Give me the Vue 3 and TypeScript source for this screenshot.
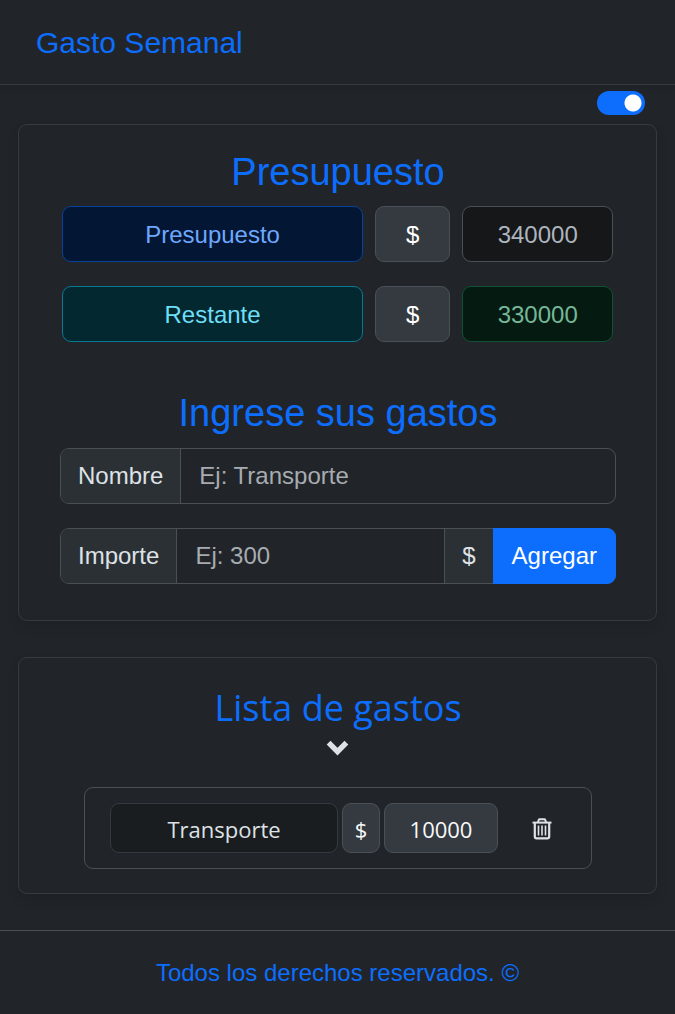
<script setup lang="ts">
import { computed, ref } from 'vue'

interface Expense {
  id: number
  name: string
  amount: number
}

const budget = ref(340000)
const expenses = ref<Expense[]>([{ id: 1, name: 'Transporte', amount: 10000 }])
const remaining = computed(() => budget.value - expenses.value.reduce((sum, e) => sum + e.amount, 0))

const dark = ref(true)
const open = ref(true)
const name = ref('')
const amount = ref('')
let nextId = 2

function addExpense() {
  const value = Number(amount.value)
  if (!name.value.trim() || !(value > 0)) return
  expenses.value.push({ id: nextId++, name: name.value.trim(), amount: value })
  name.value = ''
  amount.value = ''
}

function removeExpense(id: number) {
  expenses.value = expenses.value.filter((e) => e.id !== id)
}
</script>

<template>
  <div class="page">
    <header class="header">
      <h1>Gasto Semanal</h1>
    </header>

    <div class="theme">
      <input v-model="dark" class="switch" type="checkbox" role="switch" aria-label="Modo oscuro" />
    </div>

    <main>
      <section class="card">
        <h2>Presupuesto</h2>
        <div class="summary">
          <span class="box primary">Presupuesto</span>
          <span class="box currency">$</span>
          <span class="box dark">{{ budget }}</span>
          <span class="box info">Restante</span>
          <span class="box currency">$</span>
          <span class="box success">{{ remaining }}</span>
        </div>

        <h2>Ingrese sus gastos</h2>
        <form class="form" @submit.prevent="addExpense">
          <div class="group">
            <label class="addon" for="name">Nombre</label>
            <input id="name" v-model="name" class="field" type="text" placeholder="Ej: Transporte" />
          </div>
          <div class="group">
            <label class="addon" for="amount">Importe</label>
            <input id="amount" v-model="amount" class="field" type="text" inputmode="numeric" placeholder="Ej: 300" />
            <span class="addon">$</span>
            <button class="add" type="submit">Agregar</button>
          </div>
        </form>
      </section>

      <section class="card list">
        <h2>Lista de gastos</h2>
        <button class="toggle" type="button" aria-label="Mostrar u ocultar gastos" :aria-expanded="open" @click="open = !open">
          <svg width="24" height="18" viewBox="0 0 24 18">
            <path d="M2.6 3.6 L11.5 12.6 L20.4 3.6" fill="none" stroke="currentColor" stroke-width="5.4" />
          </svg>
        </button>
        <ul v-if="open" class="items">
          <li v-for="e in expenses" :key="e.id" class="item">
            <span class="chip name">{{ e.name }}</span>
            <span class="chip">$</span>
            <span class="chip value">{{ e.amount }}</span>
            <button class="remove" type="button" aria-label="Eliminar gasto" @click="removeExpense(e.id)">
              <svg width="20" height="22" viewBox="0 0 20 22" fill="none" stroke="currentColor">
                <path d="M0.5 4.6 H19.5" stroke-width="2" />
                <path d="M6 4.4 L6.8 1.8 Q7 1.2 7.6 1.2 H12.4 Q13 1.2 13.2 1.8 L14 4.4" stroke-width="2" />
                <path d="M2.8 5 V18.6 Q2.8 20.4 4.6 20.4 H15.4 Q17.2 20.4 17.2 18.6 V5" stroke-width="2.2" />
                <path d="M6.5 7.4 V17.4 M10 7.4 V17.4 M13.5 7.4 V17.4" stroke-width="1.6" />
              </svg>
            </button>
          </li>
        </ul>
      </section>
    </main>

    <footer class="footer">Todos los derechos reservados. ©</footer>
  </div>
</template>

<style>
body {
  background: #212529;
}
</style>

<style scoped>
.page,
.page * {
  box-sizing: border-box;
}

.page {
  color: #dee2e6;
  background: #212529;
  font: 24px/36px "Liberation Sans", Arial, sans-serif;
}

h1,
h2 {
  margin: 0;
  color: #0d6efd;
  font-weight: 400;
}

.header {
  padding: 25px 36px 23px;
  border-bottom: 1px solid #373b3e;
  box-shadow: 0 3px 6px rgba(0, 0, 0, 0.08);
}

h1 {
  font-size: 30px;
  line-height: 36px;
}

.theme {
  display: flex;
  justify-content: flex-end;
  padding: 6px 30px 9px;
}

.switch {
  appearance: none;
  width: 48px;
  height: 24px;
  margin: 0;
  border-radius: 12px;
  background: radial-gradient(circle at 12px 12px, #fff 8px, transparent 9px) #495057;
  cursor: pointer;
}

.switch:checked {
  background: radial-gradient(circle at 36px 12px, #fff 8px, transparent 9px) #0d6efd;
}

main {
  display: flex;
  flex-direction: column;
  gap: 36px;
  padding: 0 18px 36px;
}

.card {
  padding: 24px 40px 36px 41px;
  border: 1px solid #373b3e;
  border-radius: 9px;
  text-align: center;
  box-shadow: 0 6px 12px rgba(0, 0, 0, 0.1);
}

h2 {
  font-size: 38px;
  line-height: 46px;
}

.summary {
  display: grid;
  grid-template-columns: 4fr 1fr 2fr;
  gap: 24px 12px;
  margin: 11px 3px 48px 2px;
}

.box {
  padding: 10px 0 8px;
  border: 1px solid;
  border-radius: 9px;
}

.primary {
  color: #6ea8fe;
  background: #031633;
  border-color: #084298;
}

.currency {
  color: #fff;
  background: #343a40;
  border-color: #495057;
}

.dark {
  color: #adb5bd;
  background: #161719;
  border-color: #495057;
}

.info {
  color: #6edff6;
  background: #032830;
  border-color: #087990;
}

.success {
  color: #75b798;
  background: #051b11;
  border-color: #0f5132;
}

.form {
  display: flex;
  flex-direction: column;
  gap: 24px;
  margin-top: 12px;
}

.group {
  display: flex;
  height: 56px;
  border: 1px solid #495057;
  border-radius: 9px;
}

.addon {
  padding: 9px 17px;
  background: #2b3035;
  border-right: 1px solid #495057;
}

.addon:first-child {
  border-radius: 8px 0 0 8px;
}

.field {
  flex: 1;
  min-width: 0;
  padding: 0 18px;
  border: 0;
  border-radius: 8px;
  outline: 0;
  color: #dee2e6;
  background: transparent;
  font: inherit;
}

.field::placeholder {
  color: #a7acb1;
  opacity: 1;
}

.field + .addon {
  padding: 9px 18px 9px 17px;
  border-right: 0;
  border-left: 1px solid #495057;
}

.add {
  margin: -1px;
  padding: 0 18px;
  border: 0;
  border-radius: 0 9px 9px 0;
  padding: 0 19px;
  color: #fff;
  background: #0d6efd;
  font: inherit;
  cursor: pointer;
}

.list {
  padding-bottom: 24px;
  font-family: "Open Sans", "Noto Sans", sans-serif;
  font-size: 22px;
}

.list h2 {
  margin-top: 3px;
  font-size: 36px;
}

.toggle {
  display: flex;
  justify-content: center;
  align-items: center;
  width: 48px;
  height: 32px;
  margin: 1px auto 23px;
  padding: 0;
  border: 0;
  color: #dee2e6;
  background: transparent;
  cursor: pointer;
}

.items {
  display: flex;
  flex-direction: column;
  gap: 12px;
  margin: 0 24px;
  padding: 0;
  list-style: none;
}

.item {
  display: flex;
  gap: 4px;
  padding: 15px 25px;
  border: 1px solid #495057;
  border-radius: 9px;
}

.chip {
  flex: 0 0 38px;
  padding: 7px 0 5px;
  border: 1px solid #495057;
  border-radius: 9px;
  color: #f8f9fa;
  background: #343a40;
}

.name {
  flex: 1;
  color: #dee2e6;
  background: #1a1d20;
  border-color: #343a40;
}

.value {
  flex-basis: 114px;
}

.remove {
  display: flex;
  flex: 0 0 48px;
  align-items: center;
  justify-content: center;
  margin-left: 16px;
  padding: 2px 0 0;
  border: 0;
  color: #dee2e6;
  background: transparent;
  cursor: pointer;
}

.footer {
  padding: 24px 18px;
  border-top: 1px solid #495057;
  color: #0d6efd;
  text-align: center;
}
</style>
